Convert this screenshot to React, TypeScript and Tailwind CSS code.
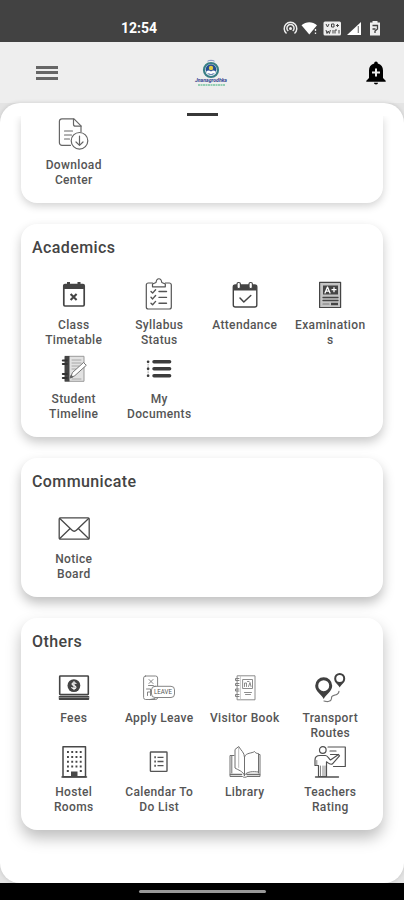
import type { ReactNode } from "react";

interface MenuItem {
  label: string;
  icon: ReactNode;
}

interface Section {
  title: string;
  items: MenuItem[];
  shadow: string;
}

const Icon = ({ children, className = "text-[#444]" }: { children: ReactNode; className?: string }) => (
  <svg
    viewBox="0 0 32 32"
    className={`h-8 w-8 shrink-0 ${className}`}
    fill="none"
    stroke="currentColor"
    strokeWidth={1.2}
    strokeLinecap="round"
    strokeLinejoin="round"
  >
    {children}
  </svg>
);

const DownloadIcon = () => (
  <Icon className="text-[#666]">
    <path d="M12.5 27.3H4a2.6 2.6 0 0 1-2.6-2.6V3.3A2.6 2.6 0 0 1 4 .8h12l7 7v6" />
    <path d="M15.5 1v5.2a2 2 0 0 0 2 2H23M6.5 13h8M6.5 17h7M6.5 21h5" />
    <circle cx="21.5" cy="22.8" r="8.3" />
    <path d="M21.5 18v9M18 24l3.5 3.4L25 24" />
  </Icon>
);

const TimetableIcon = () => (
  <Icon>
    <path d="M7 6.5h18a1.2 1.2 0 0 1 1.2 1.2v19A1.3 1.3 0 0 1 25 28H7a1.3 1.3 0 0 1-1.2-1.3v-19A1.2 1.2 0 0 1 7 6.5z" strokeWidth={1.7} />
    <path d="M6 6.5h20V11H6z" fill="currentColor" stroke="none" />
    <path d="M10.5 4v4M21 4v4" strokeWidth={3} strokeLinecap="butt" />
    <path d="M12.6 16l6 6M18.6 16l-6 6" strokeWidth={2.1} strokeLinecap="butt" />
  </Icon>
);

const SyllabusIcon = () => (
  <Icon className="text-[#555]">
    <path d="M9.5 5H5.3a2 2 0 0 0-2 2v22a2 2 0 0 0 2 2h21a2 2 0 0 0 2-2V7a2 2 0 0 0-2-2h-4" />
    <path d="M9.5 8.8V6l3.5-1.5c.8-5 5-5 5.8 0L22.3 6v2.8z" />
    <path d="M8 13.5l1.6 1.6 3-3.4M8 19.3l1.6 1.6 3-3.4M8 25.2l1.6 1.6 3-3.4M16 13.5h7.5M16 19.4h7.5M16 25.3h7.5" strokeWidth={1.4} />
  </Icon>
);

const AttendanceIcon = () => (
  <Icon>
    <rect x="4.3" y="7" width="23.5" height="22" rx="2" strokeWidth={1.4} />
    <path d="M4.3 7h23.5v5.5H4.3z" fill="currentColor" stroke="none" />
    <rect x="8" y="4.5" width="3.4" height="6" rx="1.5" fill="#fff" />
    <rect x="20" y="4.5" width="3.4" height="6" rx="1.5" fill="#fff" />
    <path d="M11 20l3.8 4 7-6.5" strokeWidth={1.5} />
  </Icon>
);

const ExamIcon = () => (
  <Icon>
    <rect x="5.6" y="4.3" width="21" height="25.2" fill="#c4c4c4" />
    <path d="M9 7.5h15v9H9z" fill="currentColor" stroke="none" />
    <path d="M11 15l2.5-6 2.5 6M12 13.2h3M18 11.7h4M20 9.7v4" stroke="#fff" strokeWidth={1.3} />
    <path d="M9 19.5h15M9 22.5h15" strokeWidth={1.3} />
    <path d="M9 26h6" stroke="#777" />
    <path d="M17 26h7" strokeWidth={2.4} strokeLinecap="butt" />
  </Icon>
);

const TimelineIcon = () => (
  <Icon className="text-[#666]">
    <rect x="7" y="4.3" width="19" height="25" fill="#e2e2e2" stroke="#9a9a9a" strokeWidth={1} />
    <path d="M7 4h4.5v25.5H7z" fill="#444" stroke="none" />
    <path d="M4.8 8.5h4M4.8 12h4M4.8 22h4M4.8 26h4" stroke="#333" strokeWidth={2} />
    <path d="M14 8h9M14 11h9M14 14h7M14 17h4" stroke="#999" strokeWidth={0.8} />
    <path d="M12.5 25.5l2-5L25.5 10.5l2.8 2.8L17 23.5z" fill="#fff" strokeWidth={0.9} />
    <path d="M12.3 25.7l2.2-.8-1.3-1.4z" fill="#333" />
    <path d="M14 27h9" stroke="#999" strokeWidth={0.8} />
  </Icon>
);

const DocumentsIcon = () => (
  <Icon className="text-[#3c3c3c]">
    <path d="M11 9.7h15.6M11 16.7h15.6M11 23.7h15.6" strokeWidth={3.5} />
    <path d="M5 9.7h.2M5 16.7h.2M5 23.7h.2" strokeWidth={2.5} />
    <path d="M5.1 9.7v14" strokeWidth={0.5} strokeDasharray="1 1.5" />
  </Icon>
);

const NoticeIcon = () => (
  <Icon className="text-[#484848]">
    <rect x="1.2" y="5.8" width="30" height="21.3" rx="1.2" strokeWidth={1.3} />
    <path d="M1.8 6.5l12 11.5a3.4 3.4 0 0 0 4.8 0L30.6 6.5M1.8 26.5l10.3-10M30.6 26.5L20.3 16.500" strokeWidth={1.3} />
  </Icon>
);

const FeesIcon = () => (
  <Icon>
    <rect x="1.7" y="4" width="28.6" height="18.6" rx="0.6" strokeWidth={1.6} />
    <circle cx="15.9" cy="13.6" r="6.4" fill="currentColor" stroke="none" />
    <path d="M18 11.5c-.6-1-3.9-1.3-4 .5 0 2 4 1.1 4 3.2 0 1.8-3.6 1.7-4.2.4M16 9.6v8" stroke="#fff" strokeWidth={1.1} />
    <path d="M.8 24h30.4v3.2a.8.8 0 0 1-.8.8H1.6a.8.8 0 0 1-.8-.8z" fill="currentColor" stroke="none" />
    <path d="M1 25.5h30" stroke="#bbb" strokeWidth={0.5} />
  </Icon>
);

const LeaveIcon = () => (
  <Icon className="text-[#777]">
    <rect x=".6" y="4" width="14" height="23.5" rx="2" strokeWidth={0.9} />
    <path d="M6 7.5l4 4M10 7.5l-4 4M5.5 13.5h5l1.5 3M3.5 17h4v3h-3v3.5M7.5 20.5v3" strokeWidth={0.9} />
    <rect x="8.5" y="14.3" width="23" height="11.2" rx="3.5" fill="#fff" strokeWidth={0.9} />
    <text x="20" y="22.4" textAnchor="middle" textLength="18" lengthAdjust="spacingAndGlyphs" className="font-['Roboto'] text-[6.5px] font-normal" fill="#555" stroke="none">
      LEAVE
    </text>
    <path d="M7 27.5l5-1" strokeWidth={0.9} />
  </Icon>
);

const VisitorIcon = () => (
  <Icon className="text-[#808080]">
    <rect x="8.5" y="3.8" width="17.5" height="24" strokeWidth={0.9} />
    <path d="M11.5 4v23.5" stroke="#bbb" strokeWidth={0.7} />
    <path d="M10 6.5H6.5v2H10M10 11.5H6.5v2H10M10 17H6.5v2H10M10 22.5H6.5v2H10" strokeWidth={1} />
    <rect x="14" y="7.5" width="9.5" height="9" strokeWidth={0.9} />
    <path d="M15.5 14.5v-3.5h2v3.5M19.5 14.5l1.5-4 1 4M18.5 9.5h1.5M15.5 20.5h7M16.5 22.5h5" strokeWidth={0.9} />
  </Icon>
);

const TransportIcon = () => (
  <Icon className="text-[#404040]">
    <path d="M9.7 27C7.5 22 1.2 19.5 1.2 13.7a8.5 8.5 0 0 1 17 0C18.2 19.5 12 22 9.7 27zM9.7 19.2a5.5 5.5 0 1 0 0-11 5.5 5.5 0 0 0 0 11z" fill="currentColor" stroke="none" fillRule="evenodd" />
    <path d="M25.7 15.5c-1.2-3-5.5-4.5-5.5-9a5.5 5.5 0 0 1 11 0c0 4.5-4.3 6-5.5 9zM25.7 10a3.5 3.5 0 1 0 0-7 3.5 3.5 0 0 0 0 7z" fill="currentColor" stroke="none" fillRule="evenodd" />
    <path d="M10 29c4 1.3 7.5.2 7.5-3 0-4 7-1.5 7.5-7" stroke="#777" strokeDasharray="2 1" />
  </Icon>
);

const HostelIcon = () => (
  <Icon className="text-[#484848]">
    <path d="M5 .8h22.5v30H5z" strokeWidth={1.5} />
    <path d="M9 6h14.8M9 11h14.8M9 15.8h14.8M9 20.5h14.8" strokeWidth={1.9} strokeDasharray="1.9 2.35" strokeLinecap="butt" />
    <path d="M8.8 25h2M21.8 25h2" strokeWidth={1.8} strokeLinecap="butt" />
    <path d="M13 25.5h6.5V31H13z" fill="currentColor" stroke="none" />
    <path d="M4 31h24.5" strokeWidth={1.5} />
  </Icon>
);

const CalendarIcon = () => (
  <Icon className="text-[#555]">
    <rect x="7.4" y="6" width="16.6" height="19.4" rx="0.6" strokeWidth={1.4} />
    <path d="M11.3 11.3h1.6M11.3 15.5h1.6M11.3 19.7h1.6" strokeWidth={2} strokeLinecap="butt" />
    <path d="M14.5 11.3h6M14.5 15.5h6M14.5 19.7h6" strokeWidth={1.3} strokeLinecap="butt" />
  </Icon>
);

const LibraryIcon = () => (
  <Icon className="text-[#707070]">
    <path d="M5 9.5H1V30.5h12.5c.5 1 4 1 4.5 0H31V8.5h-1.5" strokeWidth={1} />
    <path d="M2.8 10v17M29.5 8.5V27" strokeWidth={1} />
    <path d="M15.5 29.5V11.5c0-5-3.5-7-5.8-11L6 3.5V22c3 2 8 3 9.5 7.5z" strokeWidth={1} />
    <path d="M15.5 29V11C17 6.5 23 7.5 25.5 5.5c1 1.5 2 2 4 2v18.5c-5-.5-11-1-14 3z" strokeWidth={1} />
    <path d="M9.7 1v20.5" stroke="#aaa" strokeWidth={0.8} />
    <path d="M1.5 28.5h11M18 28.5h12.5" strokeWidth={1.6} />
  </Icon>
);

const TeacherIcon = () => (
  <Icon className="text-[#505050]">
    <circle cx="8.8" cy="4" r="3.3" />
    <path d="M14 1h17.3v19.5H19.5M16 5h6M16.5 8.5h8" strokeWidth={1.2} />
    <path d="M4.5 19.5H1v-5.5c0-3 2-4.5 5-4.5h5.5c2 0 3 2.5 5 4.5l8-5.5 1 1.3-7 8c-2 1.5-4-.5-6-2V30.5H4.5z" />
    <path d="M6.5 20v10M9 20v10M11 20v10M2.8 14.5V19" stroke="#888" strokeWidth={1} />
    <path d="M1.5 31h23" strokeWidth={1.3} />
  </Icon>
);

const sections: Section[] = [
  {
    title: "Academics",
    shadow: "shadow-[0_5px_11px_rgba(0,0,0,0.22)]",
    items: [
      { label: "Class Timetable", icon: <TimetableIcon /> },
      { label: "Syllabus Status", icon: <SyllabusIcon /> },
      { label: "Attendance", icon: <AttendanceIcon /> },
      { label: "Examinations", icon: <ExamIcon /> },
      { label: "Student Timeline", icon: <TimelineIcon /> },
      { label: "My Documents", icon: <DocumentsIcon /> },
    ],
  },
  {
    title: "Communicate",
    shadow: "shadow-[0_6px_12px_rgba(0,0,0,0.25)]",
    items: [{ label: "Notice Board", icon: <NoticeIcon /> }],
  },
  {
    title: "Others",
    shadow: "shadow-[0_8px_15px_rgba(0,0,0,0.26)]",
    items: [
      { label: "Fees", icon: <FeesIcon /> },
      { label: "Apply Leave", icon: <LeaveIcon /> },
      { label: "Visitor Book", icon: <VisitorIcon /> },
      { label: "Transport Routes", icon: <TransportIcon /> },
      { label: "Hostel Rooms", icon: <HostelIcon /> },
      { label: "Calendar To Do List", icon: <CalendarIcon /> },
      { label: "Library", icon: <LibraryIcon /> },
      { label: "Teachers Rating", icon: <TeacherIcon /> },
    ],
  },
];

const MenuGrid = ({ items }: { items: MenuItem[] }) => (
  <div className="grid grid-cols-4">
    {items.map((item) => (
      <div key={item.label} className="flex h-[74px] flex-col items-center">
        {item.icon}
        <p className="mt-[7.9px] w-[72px] text-center text-[12px] leading-[15px] font-medium tracking-[0.35px] wrap-break-word text-[#555]">
          {item.label}
        </p>
      </div>
    ))}
  </div>
);

const SectionCard = ({ section }: { section: Section }) => (
  <div className={`rounded-2xl bg-white px-2.5 pb-[10.8px] ${section.shadow}`}>
    <h2 className="h-[54px] pt-[13px] pl-px text-[16px] leading-[22px] font-medium tracking-[0.4px] text-[#444]">
      {section.title}
    </h2>
    <MenuGrid items={section.items} />
  </div>
);

const StatusBar = () => (
  <div className="flex h-[42px] items-center bg-[#424242] pt-[13px] pr-5 pl-[121px] text-white">
    <span className="text-[14px] leading-4 font-bold">12:54</span>
    <svg viewBox="0 0 102 18" className="ml-auto h-[18px] w-[102px]" fill="none" stroke="#eee">
      {/* hotspot */}
      <path d="M4.5 14.500a6.300 6.300 0 1 1 8 0M6.300 12a3.600 3.600 0 1 1 4.400 0" strokeWidth={1.5} />
      <circle cx="8.5" cy="9.5" r="1.5" fill="#eee" stroke="none" />
      {/* wifi */}
      <path d="M19.5 6.2c4.500-4 11-4 15.500 0L27.300 15.500z" fill="#fff" stroke="none" />
      <path d="M33.5 10v2M33.5 13.5v1.5" strokeWidth={1.3} />
      {/* vo wifi */}
      <rect x="41.5" y="2.5" width="17.5" height="14" rx="1.5" fill="#eee" stroke="none" />
      <path d="M44 5l1.5 3 1.5-3M49.5 5h2.5v3h-2.5zM55.5 5v3M54 6.500h3M44 11l1 3.500 1.200-2.500 1.200 2.500 1-3.500M51 11v3.500M53 14.500V11h2M57 11v3.500" stroke="#424242" strokeWidth={1} />
      {/* signal */}
      <path d="M65 16L79 3v13z" fill="#fff" stroke="none" />
      <path d="M76.3 7v7" stroke="#777" strokeWidth={1.2} />
      {/* battery */}
      <path d="M90.5 3.5V2h5v1.5H98V16.5H88V3.5z" fill="#eee" stroke="none" />
      <path d="M90.5 6.5h5v3.500l-2.500 2v2M90.500 10h3" stroke="#424242" strokeWidth={1.3} />
    </svg>
  </div>
);

const Logo = () => (
  <svg viewBox="0 0 34 30" className="h-[30px] w-[34px]">
    <circle cx="17" cy="12" r="7" fill="#e9f0f2" stroke="#397f86" strokeWidth={2.2} />
    <circle cx="17" cy="11.5" r="5.3" fill="#244c94" />
    <path d="M12.5 13c2-1 3.500-.5 4.500.6 1-1.100 2.500-1.600 4.500-.6v3c-2-.8-3.500-.5-4.500.3-1-.8-2.500-1.100-4.500-.3z" fill="#fff" />
    <circle cx="17" cy="10" r="2.2" fill="#e3ca45" />
    <path d="M13.5 3.2c2-1.200 5-1.200 7 0" stroke="#8791c4" strokeWidth={1} fill="none" />
    <text x="17" y="24" textAnchor="middle" textLength="32" lengthAdjust="spacingAndGlyphs" fill="#33418d" className="font-['Roboto'] text-[5px] font-bold italic">
      Jnanagrodhka
    </text>
    <path d="M4 27h27" stroke="#77c4a0" strokeWidth={1.6} strokeDasharray="2 .5" />
  </svg>
);

const AppBar = () => (
  <div className="flex h-[61px] items-center justify-between bg-[#eee] pr-[18px] pl-[36px]">
    <button className="flex w-[22px] flex-col gap-[2.5px]" aria-label="Menu">
      <span className="h-[3px] w-full bg-[#666]" />
      <span className="h-[3px] w-full bg-[#666]" />
      <span className="h-[3px] w-full bg-[#666]" />
    </button>
    <div className="mr-[2px]">
      <Logo />
    </div>
    <button aria-label="Notifications">
      <svg viewBox="0 0 20 24" className="h-6 w-5">
        <path d="M10 .5c1.1 0 1.8.8 1.8 2 3.500.9 5.200 3.600 5.200 7v7.500l2.700 2.800v1H.3v-1L3 17V9.500c0-3.400 1.700-6.100 5.200-7 0-1.200.7-2 1.800-2z" fill="#000" />
        <path d="M8 21.800h4c0 1-.9 1.700-2 1.700s-2-.7-2-1.700z" fill="#000" />
        <path d="M10 7.5v8M6 11.5h8" stroke="#eee" strokeWidth={2} />
      </svg>
    </button>
  </div>
);

export default function App() {
  return (
    <div className="flex h-[900px] w-[404px] flex-col overflow-hidden bg-[#e4e4e4] font-['Roboto',sans-serif]">
      <StatusBar />
      <AppBar />
      <main className="flex min-h-0 flex-1 flex-col overflow-hidden rounded-[20px] bg-white shadow-[0_0_4px_rgba(0,0,0,0.15)]">
        <div className="flex h-[13px] shrink-0 items-end justify-center">
          <span className="h-[3px] w-[31px] bg-[#383838]" />
        </div>
        <div className="flex min-h-0 flex-1 flex-col gap-[21px] overflow-hidden pr-[21px] pl-[21px]">
          {/* first card is scrolled, only its last row stays visible */}
          <div className="rounded-b-2xl bg-white px-2.5 pt-0.5 pb-[11px] shadow-[0_3px_9px_rgba(0,0,0,0.18)]">
            <MenuGrid items={[{ label: "Download Center", icon: <DownloadIcon /> }]} />
          </div>
          {sections.map((section) => (
            <SectionCard key={section.title} section={section} />
          ))}
        </div>
      </main>
      <nav className="flex h-[17px] shrink-0 items-center justify-center bg-black">
        <span className="h-[3px] w-[127px] rounded-full bg-[#999]" />
      </nav>
    </div>
  );
}
